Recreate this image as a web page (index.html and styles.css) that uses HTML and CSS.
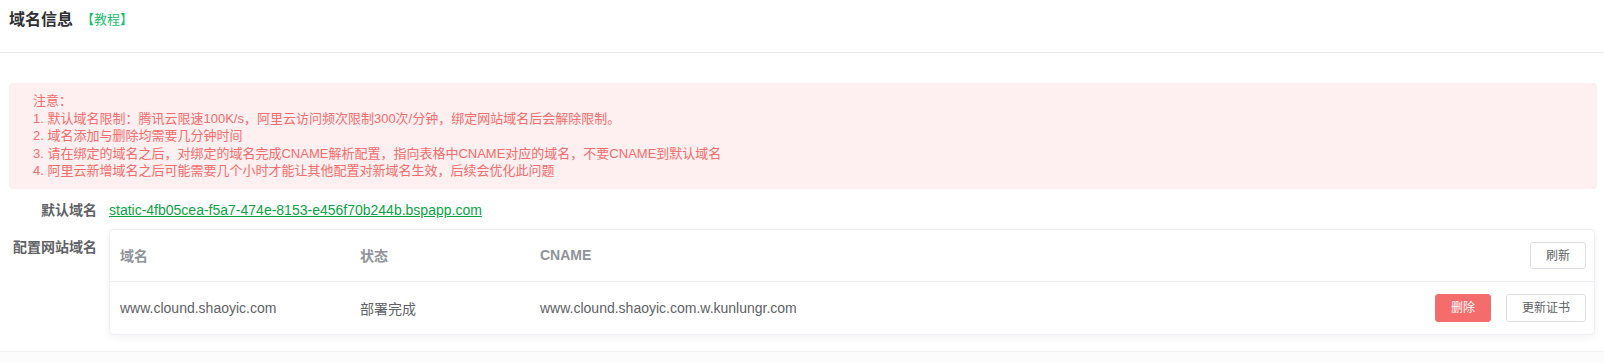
FILE: index.html
```html
<!DOCTYPE html>
<html lang="zh-CN">
<head>
<meta charset="utf-8">
<title>域名信息</title>
<link rel="stylesheet" href="styles.css">
</head>
<body>
<div class="page">
  <div class="header">
    <span class="title">域名信息</span>
    <a class="tutorial">【教程】</a>
  </div>
  <div class="content">
    <div class="alert">
      <div class="line">注意：</div>
      <div class="line">1. 默认域名限制：腾讯云限速100K/s，阿里云访问频次限制300次/分钟，绑定网站域名后会解除限制。</div>
      <div class="line">2. 域名添加与删除均需要几分钟时间</div>
      <div class="line">3. 请在绑定的域名之后，对绑定的域名完成CNAME解析配置，指向表格中CNAME对应的域名，不要CNAME到默认域名</div>
      <div class="line">4. 阿里云新增域名之后可能需要几个小时才能让其他配置对新域名生效，后续会优化此问题</div>
    </div>
    <div class="form-row first">
      <div class="label">默认域名</div>
      <div class="value"><a class="link">static-4fb05cea-f5a7-474e-8153-e456f70b244b.bspapp.com</a></div>
    </div>
    <div class="form-row second">
      <div class="label label-top">配置网站域名</div>
      <div class="card">
        <div class="row head">
          <div class="cell c1">域名</div>
          <div class="cell c2">状态</div>
          <div class="cell c3">CNAME</div>
          <div class="cell c4"><button class="btn">刷新</button></div>
        </div>
        <div class="row body">
          <div class="cell c1">www.clound.shaoyic.com</div>
          <div class="cell c2">部署完成</div>
          <div class="cell c3">www.clound.shaoyic.com.w.kunlungr.com</div>
          <div class="cell c4 actions"><button class="btn danger">删除</button><button class="btn">更新证书</button></div>
        </div>
      </div>
    </div>
  </div>
  <div class="footer"></div>
</div>
</body>
</html>
```
FILE: styles.css
```css
html, body {
  margin: 0;
  padding: 0;
  background: #ffffff;
}
body {
  font-family: "Liberation Sans", "Noto Sans CJK SC", sans-serif;
  color: #606266;
}
.header {
  height: 53px;
  border-bottom: 1px solid #ebebeb;
  padding: 10px 9px 0 9px;
  box-sizing: border-box;
  display: flex;
  align-items: flex-start;
}
.title {
  font-size: 16px;
  line-height: 20px;
  font-weight: bold;
  color: #303133;
}
.tutorial {
  font-size: 13px;
  line-height: 20px;
  color: #19be6b;
  margin-left: 8px;
}
.content {
  padding: 30px 7px 0 9px;
}
.alert {
  background: #fef0f0;
  border-radius: 4px;
  padding: 9px 16px 9px 24px;
  color: #f56c6c;
  font-size: 13px;
  line-height: 17.5px;
}
.form-row {
  display: flex;
  align-items: flex-start;
}
.form-row.first {
  margin-top: 11px;
  align-items: center;
  height: 20px;
}
.form-row.second {
  margin-top: 9px;
}
.label {
  width: 100px;
  flex: none;
  box-sizing: border-box;
  padding-right: 12px;
  text-align: right;
  font-size: 14px;
  line-height: 20px;
  font-weight: bold;
  color: #606266;
}
.label-top {
  padding-top: 8px;
}
.value {
  font-size: 14px;
  line-height: 20px;
}
.link {
  color: #0aa344;
  text-decoration: underline;
}
.card {
  flex: 1;
  margin-right: 2px;
  border: 1px solid #ebeef5;
  border-radius: 4px;
  box-shadow: 0 2px 8px 0 rgba(0, 0, 0, 0.06);
  background: #fff;
}
.row {
  display: flex;
  align-items: center;
  height: 51px;
  font-size: 14px;
}
.row.head {
  border-bottom: 1px solid #ebeef5;
  color: #909399;
  font-weight: bold;
}
.row.body {
  height: 52px;
  color: #606266;
}
.cell {
  padding: 0 10px;
  box-sizing: border-box;
}
.c1 { width: 240px; }
.c2 { width: 180px; }
.c3 { flex: 1; }
.c4 {
  display: flex;
  justify-content: flex-end;
  padding-right: 8px;
}
.actions {
  gap: 15px;
}
.btn {
  font-family: "Liberation Sans", "Noto Sans CJK SC", sans-serif;
  font-size: 12px;
  height: 28px;
  padding: 0 15px;
  border: 1px solid #dcdfe6;
  border-radius: 3px;
  background: #fff;
  color: #606266;
  font-weight: normal;
  line-height: 26px;
}
.row.head .btn {
  height: 27px;
}
.btn.danger {
  background: #f56c6c;
  border-color: #f56c6c;
  color: #fff;
}
.footer {
  margin-top: 16px;
  height: 11px;
  border-top: 1px solid #f2f2f2;
  background: #fcfcfc;
}
```
